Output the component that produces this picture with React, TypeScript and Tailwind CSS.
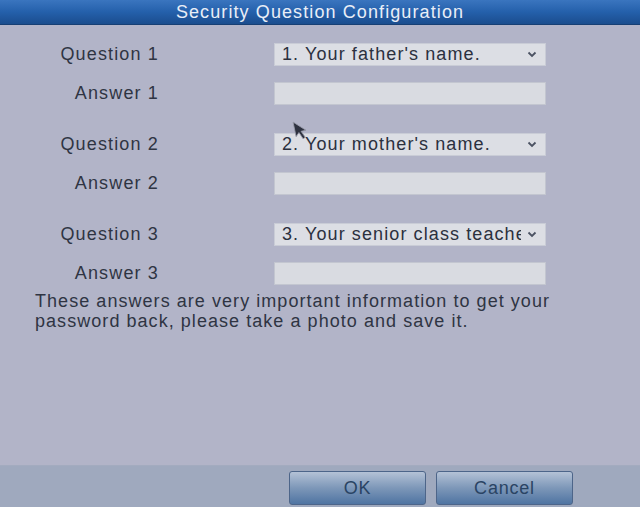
import { ReactNode } from 'react';

const questions = [
  { label: 'Question 1', answer: 'Answer 1', value: "1. Your father's name." },
  { label: 'Question 2', answer: 'Answer 2', value: "2. Your mother's name." },
  { label: 'Question 3', answer: 'Answer 3', value: '3. Your senior class teacher\u2019s name.' }
];

const Chevron = () => (
  <svg width="10" height="7" viewBox="0 0 10 7" className="shrink-0">
    <path d="M1.5 1.5 L5 5 L8.5 1.5" fill="none" stroke="#4b5262" strokeWidth="1.8" />
  </svg>
);

const Label = ({ children }: { children: ReactNode }) => (
  <div className="flex h-[23px] items-center justify-end text-[18px] tracking-[1.15px] text-[#2f3443]">{children}</div>
);

const Select = ({ value }: { value: string }) => (
  <div className="flex h-[23px] items-center gap-[6px] border border-[#c9ccd6] bg-[#dcdee4] pl-[7px] pr-[8px] text-[18px] tracking-[1.1px] text-[#2b303e]">
    <span className="flex-1 overflow-hidden whitespace-nowrap">{value}</span>
    <Chevron />
  </div>
);

const Input = () => <div className="h-[23px] border border-[#c3c6d0] bg-[#d9dbe1]" />;

const Button = ({ children }: { children: ReactNode }) => (
  <button
    type="button"
    className="flex h-[34px] w-[137px] items-center justify-center rounded-[3px] border border-[#4d6589] bg-gradient-to-b from-[#b4c2d6] via-[#7d97b8] to-[#4f74a2] text-[18px] tracking-[0.8px] text-[#2a4464]"
  >
    {children}
  </button>
);

export default function App() {
  return (
    <div className="relative flex h-[507px] w-[640px] flex-col overflow-hidden bg-[#b2b4c8] font-['Liberation_Sans',Arial,sans-serif]">
      <div className="flex h-[25px] items-center justify-center border-b border-[#173f74] bg-gradient-to-b from-[#3a75bf] via-[#2460ab] to-[#1b4d8e] text-[18px] tracking-[1.1px] text-[#e9eef7]">
        Security Question Configuration
      </div>

      <div className="flex-1 px-[35px] pt-[18px]">
        <div className="flex flex-col gap-[28px]">
          {questions.map((q) => (
            <div key={q.label} className="grid grid-cols-[124px_272px] gap-x-[115px] gap-y-[16px]">
              <Label>{q.label}</Label>
              <Select value={q.value} />
              <Label>{q.answer}</Label>
              <Input />
            </div>
          ))}
        </div>
        <p className="mt-[6px] text-[18px] leading-[20px] tracking-[1.05px] text-[#2f3443]">
          These answers are very important information to get your
          <br />
          password back, please take a photo and save it.
        </p>
      </div>

      <div className="flex h-[42px] items-start justify-end gap-[10px] border-t border-[#a3abbf] bg-[#9fa9be] pr-[67px] pt-[5px]">
        <Button>OK</Button>
        <Button>Cancel</Button>
      </div>

      <svg className="absolute left-[292px] top-[121px]" width="16" height="22" viewBox="0 0 16 22">
        <path d="M1 1 L1 16 L4.6 12.6 L7.4 19.5 L9.8 18.5 L7 11.8 L12 11.8 Z" fill="#2e3240" stroke="#9a9dab" strokeWidth="0.8" transform="rotate(-12 1 1)" />
      </svg>
    </div>
  );
}
